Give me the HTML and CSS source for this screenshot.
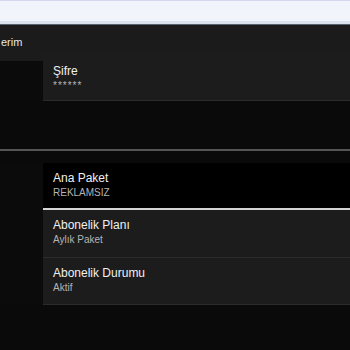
FILE: index.html
```html
<!DOCTYPE html>
<html lang="tr">
<head>
<meta charset="utf-8">
<link rel="stylesheet" href="styles.css">
</head>
<body>
<div class="topbar"></div>
<div class="topline"></div>
<div class="account">
  <div class="account-head">erim</div>
  <div class="account-row">
    <div class="side"><div class="side-cap"></div><div class="side-fill"></div></div>
    <div class="item item-password">
      <div class="item-title">Şifre</div>
      <div class="item-sub item-stars">******</div>
    </div>
  </div>
</div>
<div class="gap"></div>
<div class="rule"></div>
<div class="plans">
  <div class="side"></div>
  <div class="list">
    <div class="item item-black">
      <div class="item-title">Ana Paket</div>
      <div class="item-sub">REKLAMSIZ</div>
    </div>
    <div class="item">
      <div class="item-title">Abonelik Planı</div>
      <div class="item-sub">Aylık Paket</div>
    </div>
    <div class="item item-last">
      <div class="item-title">Abonelik Durumu</div>
      <div class="item-sub">Aktif</div>
    </div>
  </div>
</div>
</body>
</html>
```
FILE: styles.css
```css
* { box-sizing: border-box; }
html, body { margin: 0; padding: 0; }
body {
  background: #0a0a0a;
  font-family: "Liberation Sans", Arial, sans-serif;
  height: 350px;
  overflow: hidden;
}
.topbar {
  height: 24px;
  background: #f1f5fb;
  border-top: 1px solid #d6d9ee;
  border-bottom: 3px solid #dae2ee;
}
.topline { height: 1px; background: #56636f; }
.account { background: #1b1b1b; }
.account-head {
  height: 28px;
  padding: 9px 0 3px 1px;
  font-size: 11px;
  line-height: 16px;
  color: #e8e8e8;
}
.account-row { display: flex; }
.side { width: 43px; flex: none; display: flex; flex-direction: column; }
.side-cap { height: 8px; }
.side-fill { flex: 1; background: #0b0b0b; }
.item {
  flex: none;
  height: 48px;
  padding: 8px 10px 0;
  background: #1c1c1c;
  border-bottom: 1px solid #2b2b2b;
}
.item-password { flex: 1; padding-top: 11px; }
.item-title {
  font-size: 12px;
  line-height: 15px;
  color: #f0f0f0;
}
.item-sub {
  font-size: 10px;
  line-height: 13px;
  color: #b4b4b4;
}
.item-stars { letter-spacing: 1px; }
.gap { height: 48px; }
.rule { height: 2px; background: #555; }
.plans { display: flex; padding-top: 12px; }
.plans .side { background: #0b0b0b; }
.list { flex: 1; display: flex; flex-direction: column; }
.item-black {
  background: #000;
  height: 47px;
  border-bottom: 2px solid #d4d4d4;
}
.item-last { height: 47px; }
```
